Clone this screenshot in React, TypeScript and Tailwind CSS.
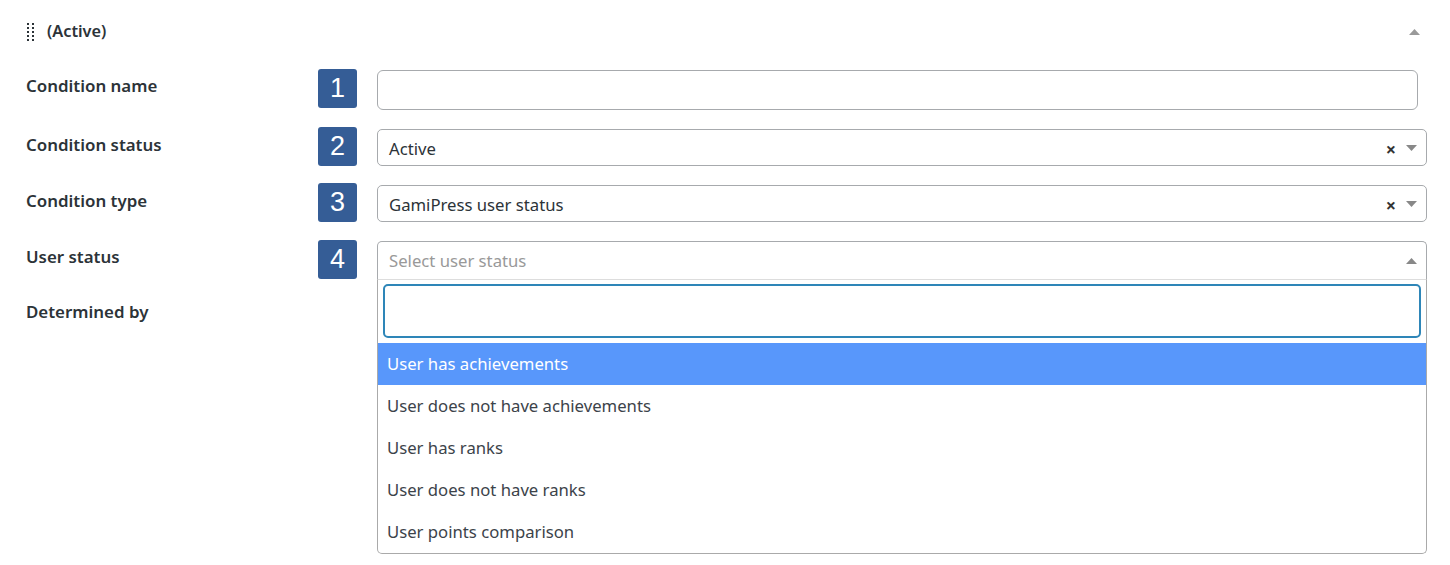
import React from "react";

const FONT = { fontFamily: '"Segoe UI", "Noto Sans", "Open Sans", sans-serif' };

function Badge({ n }: { n: number }) {
  return (
    <div className="w-[39px] h-[39px] shrink-0 rounded-[3px] bg-[#355d96] text-white flex items-center justify-center text-[27px] leading-none" style={{ fontFamily: '"Liberation Sans", Arial, sans-serif' }}>
      {n}
    </div>
  );
}

function DownArrow() {
  return (
    <svg width="11" height="6" viewBox="0 0 11 6" className="shrink-0">
      <path d="M0 0 L11 0 L5.5 6 Z" fill="#888" />
    </svg>
  );
}

function UpArrow({ color = "#888" }: { color?: string }) {
  return (
    <svg width="11" height="6" viewBox="0 0 11 6" className="shrink-0">
      <path d="M0 6 L11 6 L5.5 0 Z" fill={color} />
    </svg>
  );
}

function SelectBox({ value }: { value: string }) {
  return (
    <div className="h-[37px] mt-[2px] rounded-[5px] border border-[#a7aaad] bg-white flex items-center pl-[11px] pr-[9px]">
      <span className="flex-1 text-[16.7px] text-[#2c3338] pt-[3px]">{value}</span>
      <span className="text-[18px] font-bold text-[#333] leading-none mr-[10px] mt-[2px]">×</span>
      <DownArrow />
    </div>
  );
}

function Label({ text, pt }: { text: string; pt: string }) {
  return (
    <div className={`w-[292px] shrink-0 text-[16.9px] font-semibold text-[#2c3338] leading-[24px] ${pt}`}>{text}</div>
  );
}

const options = [
  "User has achievements",
  "User does not have achievements",
  "User has ranks",
  "User does not have ranks",
  "User points comparison",
];

export default function App() {
  return (
    <div className="w-[1450px] h-[565px] bg-white pl-[26px] pt-[19px] relative overflow-hidden" style={FONT}>
      {/* Header */}
      <div className="flex items-center h-[25px] pr-[30px]">
        <svg width="9" height="19" viewBox="0 0 9 19" className="mr-[12px]">
          {[0, 1, 2, 3, 4].map((r) => (
            <g key={r}>
              <rect x="1" y={1 + r * 4} width="2" height="2" fill="#2c3338" />
              <rect x="6" y={1 + r * 4} width="2" height="2" fill="#2c3338" />
            </g>
          ))}
        </svg>
        <span className="text-[16.3px] font-semibold text-[#2c3338] flex-1">(Active)</span>
        <UpArrow color="#9a9a9a" />
      </div>

      {/* Row 1 */}
      <div className="flex mt-[25px] pr-[32px]">
        <Label text="Condition name" pt="pt-[5px]" />
        <Badge n={1} />
        <div className="flex-1 ml-[20px] mt-[1px] h-[40px] rounded-[6px] border border-[#a7aaad] bg-white" />
      </div>

      {/* Row 2 */}
      <div className="flex mt-[17px] pr-[23px]">
        <Label text="Condition status" pt="pt-[6px]" />
        <Badge n={2} />
        <div className="flex-1 ml-[20px]">
          <SelectBox value="Active" />
        </div>
      </div>

      {/* Row 3 */}
      <div className="flex mt-[17px] pr-[23px]">
        <Label text="Condition type" pt="pt-[6px]" />
        <Badge n={3} />
        <div className="flex-1 ml-[20px]">
          <SelectBox value="GamiPress user status" />
        </div>
      </div>

      {/* Row 4 */}
      <div className="flex mt-[18px] pr-[23px]">
        <Label text="User status" pt="pt-[5px]" />
        <Badge n={4} />
        <div className="flex-1 ml-[20px] relative">
          <div className="h-[38px] mt-[1px] rounded-t-[5px] border border-b-0 border-[#a7aaad] bg-white flex items-center pl-[11px] pr-[9px]">
            <span className="flex-1 text-[16.7px] text-[#999]">Select user status</span>
            <UpArrow />
          </div>
          {/* Dropdown */}
          <div className="absolute left-0 right-0 top-[39px] z-10 bg-white border border-[#aaa] rounded-b-[5px] border-t-[#ddd]">
            <div className="pt-[4px] px-[5px] pb-[5px]">
              <div className="h-[54px] rounded-[5px] border-2 border-[#2e86b8] bg-white" />
            </div>
            <ul className="text-[16.7px] text-[#3c434a]">
              {options.map((o, i) => (
                <li
                  key={o}
                  className={`h-[42px] flex items-center pl-[9px] ${i === 0 ? "bg-[#5897fb] text-white" : ""}`}
                >
                  {o}
                </li>
              ))}
            </ul>
          </div>
        </div>
      </div>

      {/* Row 5 */}
      <div className="flex mt-[21px]">
        <Label text="Determined by" pt="pt-[0px]" />
      </div>
    </div>
  );
}
